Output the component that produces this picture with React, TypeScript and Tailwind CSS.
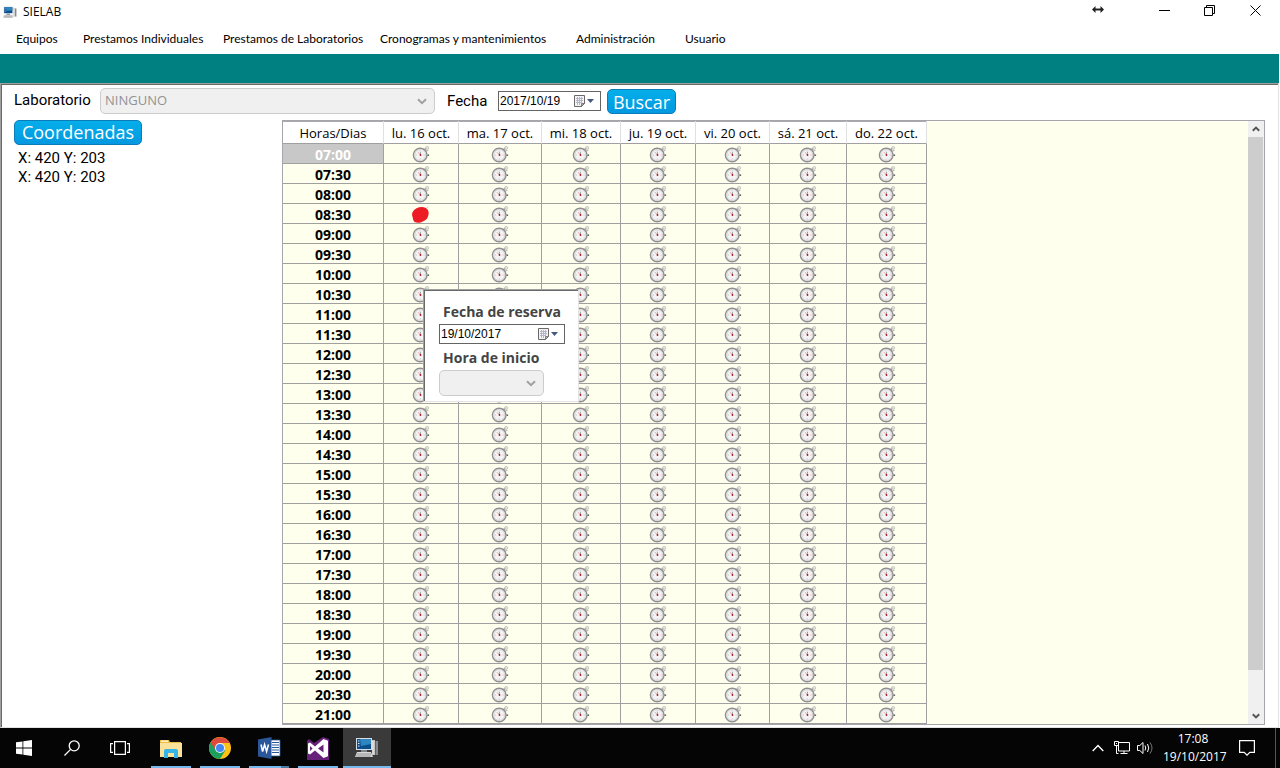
import React from "react";

const days = [
  { label: "lu. 16 oct.", width: "w-[75px]" },
  { label: "ma. 17 oct.", width: "w-[83px]" },
  { label: "mi. 18 oct.", width: "w-[79px]" },
  { label: "ju. 19 oct.", width: "w-[75px]" },
  { label: "vi. 20 oct.", width: "w-[74px]" },
  { label: "sá. 21 oct.", width: "w-[77px]" },
  { label: "do. 22 oct.", width: "w-[80px]" },
];

const hours = Array.from({ length: 29 }, (_, i) => {
  const h = 7 + Math.floor(i / 2);
  return `${String(h).padStart(2, "0")}:${i % 2 ? "30" : "00"}`;
});

const menu = [
  { label: "Equipos", width: "w-[67px]" },
  { label: "Prestamos Individuales", width: "w-[140px]" },
  { label: "Prestamos de Laboratorios", width: "w-[157px]" },
  { label: "Cronogramas y mantenimientos", width: "w-[196px]" },
  { label: "Administración", width: "w-[109px]" },
  { label: "Usuario", width: "w-[60px]" },
];

function Stopwatch() {
  return (
    <svg className="mx-auto block h-[17px] w-[18px]" viewBox="0 0 18 17" aria-hidden="true">
      <path d="M12 4.200 14.600 2" stroke="#aaa" strokeWidth="2" />
      <circle cx="15.200" cy="1.900" r="1.500" fill="#e4e4e0" stroke="#bcbcb8" strokeWidth=".7" />
      <path d="m13.800 5.200 2.600-1" stroke="#b4b4b0" strokeWidth="1.200" />
      <circle cx="8.200" cy="9" r="6.800" fill="#f0eeee" stroke="#909090" strokeWidth="1.400" />
      <circle cx="8.200" cy="9" r="5.500" fill="#f4f2f3" stroke="#d2d0d0" strokeWidth=".9" />
      <path d="M8.200 4.600v1M8.200 12.600v1M3.800 9h1M11.600 9h1" stroke="#aaa" strokeWidth=".7" />
      <path d="M8.500 9 6 6.200" stroke="#dda0a0" strokeWidth=".9" />
      <path d="M8.500 9V6" stroke="#888" strokeWidth=".7" />
      <circle cx="8.500" cy="9" r=".9" fill="#a51c28" />
      <rect x="15.500" y="8.400" width="1.600" height="1.600" fill="#666" />
    </svg>
  );
}

function RedMark() {
  return (
    <svg className="mx-auto block h-[17px] w-[18px]" viewBox="0 0 18 17" aria-hidden="true">
      <path d="M4.500 2.200Q8 .4 12 1.200 16 2.400 16.600 6q.4 4-1.800 7-3 2.600-6.300 3.600-3.500.6-6-.6Q.6 14 .8 11.500-.4 9.500.4 6.500 1.600 3.600 4.500 2.200Z" fill="#ed1c24" />
      <path d="m14.500 2.200 1.700-1.300" stroke="#e8b8b0" strokeWidth="1" />
    </svg>
  );
}

function Chevron({ className }: { className: string }) {
  return (
    <svg className={className} viewBox="0 0 10 7" fill="none" aria-hidden="true">
      <path d="m1 1.200 4 4 4-4" stroke="currentColor" strokeWidth="2" />
    </svg>
  );
}

function DateField({ id, value, className }: { id: string; value: string; className: string }) {
  return (
    <div className={`flex h-5 items-center border border-[#646464] bg-white ${className}`}>
      <input
        id={id}
        type="text"
        defaultValue={value}
        className="h-full min-w-0 flex-1 pl-px font-['Liberation_Sans',sans-serif] text-[12px] leading-4 text-black outline-none"
      />
      <button type="button" aria-label="Abrir calendario" className="flex h-full w-[26px] items-center">
        <svg className="h-3 w-[21px]" viewBox="0 0 21 12" aria-hidden="true">
          <path d="M.5.5h10v8l-3 3h-7z" fill="#f3f3f8" stroke="#6d6867" />
          <path d="M10.500 8.500h-3v3z" fill="#aaa" stroke="#6d6867" strokeWidth=".8" />
          <path d="M2 3.500h7M2 5.500h7M2 7.500h6M3.500 2v8M5.500 2v8M7.500 2v6" stroke="#b4b6c4" />
          <path d="M13 4h7l-3.500 4z" fill="#44597c" />
        </svg>
      </button>
    </div>
  );
}

function Computer({ className }: { className: string }) {
  return (
    <svg className={className} viewBox="0 0 24 22" aria-hidden="true">
      <path d="M17 3h3v15h-3z" fill="#c5c5c5" />
      <path d="M20.500 4H23v14h-2.500z" fill="#888" />
      <path d="M18 4v13" stroke="#eee" strokeWidth="1" />
      <path d="M1 1h16v12H1z" fill="#d4dde3" />
      <path d="M2 2h14v10H2z" fill="#0c4d8c" />
      <path d="M5 2h11v5L6 9z" fill="#2f85bd" />
      <path d="M3 4h1.500M3 6.500h1.500M3 9h1.500" stroke="#d8f2ff" />
      <path d="M6 13h6v3H6z" fill="#7e868b" />
      <path d="M2 15h14l2 5H0z" fill="#d9d9d9" />
      <path d="M2 17h14M1 19h15" stroke="#858585" strokeWidth=".8" />
    </svg>
  );
}

function ScrollArrow({ up }: { up?: boolean }) {
  return (
    <button type="button" aria-label={up ? "Subir" : "Bajar"} className="flex h-4 w-full items-center justify-center text-[#555]">
      <svg className="h-[6px] w-2" viewBox="0 0 8 6" fill="none" aria-hidden="true">
        <path d={up ? "m.8 4.800 3.200-3.200 3.200 3.200" : "m.8 1.200 3.200 3.200 3.200-3.200"} stroke="currentColor" strokeWidth="2" />
      </svg>
    </button>
  );
}

const ui = "font-['Open_Sans','Noto_Sans',sans-serif]";
const roboto = "font-['Roboto',sans-serif]";
const blueBox = "rounded-[5px] border border-[#0a7cb8] bg-gradient-to-b from-[#05aeea] to-[#0498e0] text-white";
const sunken = "border border-t-[#a0a0a0] border-r-[#e3e3e3] border-b-[#e3e3e3] border-l-[#a0a0a0] shadow-[inset_1px_1px_0_#696969]";

function TitleBar() {
  return (
    <div className="flex h-6 items-center pl-[3px]">
      <Computer className="mr-[6px] h-[13px] w-[14px]" />
      <h1 className="flex-1 text-[12px] leading-4">SIELAB</h1>
      <svg className="mr-[38px] mb-[6px] h-[7px] w-3" viewBox="0 0 12 7" aria-hidden="true">
        <path d="M3 3.500h6" stroke="#222" strokeWidth="2" />
        <path d="M0 3.500 3.500 0v7zM12 3.500 8.500 0v7z" fill="#222" />
      </svg>
      <div className="mr-px mb-1 flex">
        <button type="button" aria-label="Minimizar" className="flex h-5 w-[45px] items-center justify-center">
          <svg className="h-[11px] w-[11px]" viewBox="0 0 11 11"><path d="M0 5.500h11" stroke="#000" /></svg>
        </button>
        <button type="button" aria-label="Restaurar" className="flex h-5 w-[45px] items-center justify-center">
          <svg className="h-[11px] w-[11px]" viewBox="0 0 11 11" fill="none" stroke="#000">
            <path d="M.5 2.500h8v8h-8zM2.500 2V.5h8v8H9" />
          </svg>
        </button>
        <button type="button" aria-label="Cerrar" className="flex h-5 w-[47px] items-center justify-center">
          <svg className="h-[11px] w-[11px]" viewBox="0 0 11 11"><path d="m.5.500 10 10m0-10-10 10" stroke="#000" /></svg>
        </button>
      </div>
    </div>
  );
}

function ReservePanel() {
  return (
    <section className={`absolute top-[168px] left-[140px] w-[156px] bg-white pt-3 pb-[5px] pl-[15px] text-[#444] ${sunken}`}>
      <label htmlFor="reserva" className="block pl-1 text-[14px] leading-5 font-bold">Fecha de reserva</label>
      <DateField id="reserva" value="19/10/2017" className="mt-[2px] w-[126px]" />
      <label htmlFor="inicio" className="block pt-1 pl-1 text-[14px] leading-5 font-bold">Hora de inicio</label>
      <div className="relative mt-[2px] w-[105px]">
        <select id="inicio" disabled className="block h-[26px] w-full appearance-none rounded-[5px] border border-[#ccc] bg-[#f0f0f0]">
          <option></option>
        </select>
        <Chevron className="pointer-events-none absolute top-[10px] right-2 h-[7px] w-[10px] text-[#a0a0a0]" />
      </div>
    </section>
  );
}

function Schedule() {
  return (
    <div className="flex min-w-0 flex-1 border border-[#a5a5ab] bg-[#ffffee]">
      <div className="relative min-w-0 flex-1">
        <table className="w-[644px] table-fixed border-separate border-spacing-0 text-[13px] leading-4">
          <thead>
            <tr className="h-[23px] bg-white">
              <th scope="col" className="w-[101px] border-r border-b border-r-[#e0e0e0] border-b-[#a0a0a0] p-0 pt-px font-normal shadow-[inset_0_1px_0_#aaa]">Horas/Dias</th>
              {days.map((d) => (
                <th key={d.label} scope="col" className={`${d.width} border-r border-b border-r-[#e0e0e0] border-b-[#a0a0a0] p-0 pt-px font-normal whitespace-nowrap shadow-[inset_0_1px_0_#aaa]`}>
                  {d.label}
                </th>
              ))}
            </tr>
          </thead>
          <tbody>
            {hours.map((h, r) => (
              <tr key={h} className="h-5">
                <th scope="row" className={`border-r border-b border-[#a0a0a0] p-0 pt-[2px] text-[14px] leading-4 font-bold ${r === 0 ? "bg-[#c8c8c8] text-white" : "text-black"}`}>
                  {h}
                </th>
                {days.map((d, c) => (
                  <td key={d.label} className="border-r border-b border-[#a0a0a0] p-0 pt-[2px]">
                    {r === 3 && c === 0 ? <RedMark /> : <Stopwatch />}
                  </td>
                ))}
              </tr>
            ))}
          </tbody>
        </table>
        <ReservePanel />
      </div>
      <div className="flex w-4 flex-col bg-[#f0f0f0]">
        <ScrollArrow up />
        <div className="mr-px flex-1 bg-[#cdcdcd]"></div>
        <div className="h-[38px]"></div>
        <ScrollArrow />
      </div>
    </div>
  );
}

function TaskButton({ label, active, running, children }: { label: string; active?: boolean; running?: boolean; children: React.ReactNode }) {
  return (
    <button
      type="button"
      aria-label={label}
      className={`relative flex h-10 w-12 items-center justify-center ${active ? "bg-[#3a3a3a]" : ""}`}
    >
      {children}
      {running && <span className={`absolute bottom-0 h-[2px] bg-[#76b9ed] ${active ? "inset-x-0" : "inset-x-1"}`}></span>}
    </button>
  );
}

function Taskbar() {
  return (
    <footer className="flex h-10 items-center bg-[#040504] text-white">
      <TaskButton label="Inicio">
        <svg className="h-4 w-4" viewBox="0 0 16 16" fill="#fff"><path d="M0 2.300 6.500 1.400v6.200H0zM7.300 1.300 16 0v7.600H7.300zM0 8.400h6.500v6.200L0 13.700zM7.300 8.400H16V16l-8.700-1.300z" /></svg>
      </TaskButton>
      <TaskButton label="Buscar en Windows">
        <svg className="h-4 w-4" viewBox="0 0 16 16" fill="none" stroke="#fff" strokeWidth="1.300"><circle cx="10.200" cy="5.800" r="5" /><path d="M6.600 9.400.5 15.500" /></svg>
      </TaskButton>
      <TaskButton label="Vista de tareas">
        <svg className="h-[14px] w-5" viewBox="0 0 20 14" fill="none" stroke="#fff" strokeWidth="1.200"><path d="M4.600.6h10.800v12.800H4.600zM3 2.600H.6v8.800H3M17 2.600h2.400v8.800H17" /></svg>
      </TaskButton>
      <div className="ml-[3px] flex gap-px">
        <TaskButton label="Explorador de archivos" running>
          <svg className="h-[19px] w-[22px]" viewBox="0 0 22 19">
            <path d="M0 1h9l1 2h11v15H0z" fill="#eabb45" />
            <path d="M0 4h22v14H0z" fill="#fbe29a" />
            <path d="M1 1.500h7v1.500H1z" fill="#fff4c6" />
            <path d="M4 19v-7q0-2 2-2h10q2 0 2 2v7h-4v-5H8v5z" fill="#37b4e6" />
          </svg>
        </TaskButton>
        <TaskButton label="Chrome" running>
          <svg className="h-[22px] w-[22px]" viewBox="0 0 22 22">
            <circle cx="11" cy="11" r="11" fill="#fbc116" />
            <path d="M11 11 1.500 5.500A11 11 0 0 0 11 22l5.200-8.500z" fill="#1ba15d" />
            <path d="M1.500 5.500A11 11 0 0 1 20.600 6H11a5 5 0 0 0-4.700 6.600z" fill="#de4b3c" />
            <circle cx="11" cy="11" r="5" fill="#f4f4f4" />
            <circle cx="11" cy="11" r="4" fill="#4285f4" />
          </svg>
        </TaskButton>
        <TaskButton label="Word" running>
          <span className="absolute right-1 bottom-0 z-10 h-[2px] w-2 bg-[#4c7ba2]"></span>
          <svg className="h-[22px] w-[23px]" viewBox="0 0 23 22">
            <path d="M12 3h10v16H12z" fill="#fff" stroke="#2b579a" strokeWidth=".8" />
            <path d="M14 5.500h7M14 8h7M14 10.500h7M14 13h7M14 15.500h7" stroke="#2b579a" />
            <path d="M0 2.500 13.500 0v22L0 19.500z" fill="#2b579a" />
            <path d="m3 7.500 1.600 7 2-7 2 7 1.900-7" fill="none" stroke="#fff" strokeWidth="1.500" />
          </svg>
        </TaskButton>
        <TaskButton label="Visual Studio" running>
          <svg className="h-[23px] w-[22px]" viewBox="0 0 22 23">
            <path d="M0 4 2 2l5 4 9-6 6 2v21H0z" fill="#68217a" />
            <path fillRule="evenodd" d="m1 6.500 2-1 5 4L16.500 2 21 3.800v15.400L16.500 21 8 13.500l-5 4-2-1zM3 9v5l2.600-2.500zM16.500 7.500l-5.500 4 5.500 4z" fill="#fff" />
          </svg>
        </TaskButton>
        <TaskButton label="SIELAB" running active>
          <Computer className="h-[22px] w-6" />
        </TaskButton>
      </div>
      <div className="ml-auto flex h-full items-center">
        <svg className="mr-[10px] h-2 w-3" viewBox="0 0 12 8" fill="none" stroke="#fff" strokeWidth="1.400"><path d="m.7 7 5.300-5.500L11.300 7" /></svg>
        <svg className="mr-[7px] h-[14px] w-4" viewBox="0 0 16 14" fill="none" stroke="#fff"><path d="M4.500 1.500h11v8.500h-11zM10 10v2.500M6.500 12.500h7M2.500 4.500V12.500h2" /><path d="M.5.500h4v4h-4z" fill="#040504" /><path d="M2 2.500h1" /></svg>
        <svg className="mr-[10px] h-[14px] w-4" viewBox="0 0 16 14" fill="none" stroke="#fff"><path d="M.5 4.500h2.300L6 1.500v11l-3.200-3H.5zM8 4.500q1.500 2.500 0 5M10.500 3q2.500 4 0 8" /><path d="M13 1.500q4 5.500 0 11" stroke="#777" /></svg>
        <time className="w-[60px] text-center text-[12px] leading-[18px]">17:08<br />19/10/2017</time>
        <svg className="mr-5 ml-4 h-4 w-4" viewBox="0 0 16 16" fill="none" stroke="#fff" strokeWidth="1.200"><path d="M.6.600h14.800v11.800h-4.600L8 15.200l-2.800-2.800H.6z" /></svg>
        <span className="mr-1 h-full w-px bg-[#555]"></span>
      </div>
    </footer>
  );
}

export default function App() {
  return (
    <div className={`flex min-h-screen flex-col bg-white text-black ${ui}`}>
      <header>
        <TitleBar />
        <nav className="flex h-[30px] items-center pl-4 font-['Lato','Open_Sans',sans-serif] text-[12px] leading-4 whitespace-nowrap">
          {menu.map((m) => (
            <button key={m.label} type="button" className={`${m.width} text-left`}>{m.label}</button>
          ))}
        </nav>
        <div className="mr-px h-[29px] bg-[#008080]"></div>
      </header>
      <main className={`mr-px flex flex-1 flex-col pt-px pb-[2px] pl-px ${sunken}`}>
        <form className="flex h-[35px] items-center pl-3" onSubmit={(e) => e.preventDefault()}>
          <label htmlFor="laboratorio" className={`w-[86px] pb-[5px] text-[15px] leading-5 ${roboto}`}>Laboratorio</label>
          <div className="relative mb-[3px] w-[335px]">
            <select id="laboratorio" disabled className="block h-[26px] w-full appearance-none rounded-[5px] border border-[#ccc] bg-[#f0f0f0] pl-1 text-[13px] text-[#929292] opacity-100">
              <option>NINGUNO</option>
            </select>
            <Chevron className="pointer-events-none absolute top-[10px] right-2 h-[7px] w-[10px] text-[#a0a0a0]" />
          </div>
          <label htmlFor="fecha" className={`ml-3 w-[51px] pb-[3px] text-[15px] leading-5 ${roboto}`}>Fecha</label>
          <DateField id="fecha" value="2017/10/19" className="mb-[3px] w-[103px]" />
          <button type="submit" className={`mb-[2px] ml-[6px] h-[25px] w-[69px] text-[18px] leading-[22px] ${blueBox}`}>Buscar</button>
        </form>
        <div className="flex flex-1 pr-[13px]">
          <aside className="w-[280px] shrink-0 pl-3">
            <h2 className={`h-[25px] w-32 text-center text-[18px] leading-[22px] ${blueBox}`}>Coordenadas</h2>
            <div className={`pt-1 pl-1 text-[15px] leading-[19px] ${roboto}`}>
              <p>X: 420 Y: 203</p>
              <p>X: 420 Y: 203</p>
            </div>
          </aside>
          <Schedule />
        </div>
      </main>
      <Taskbar />
    </div>
  );
}
